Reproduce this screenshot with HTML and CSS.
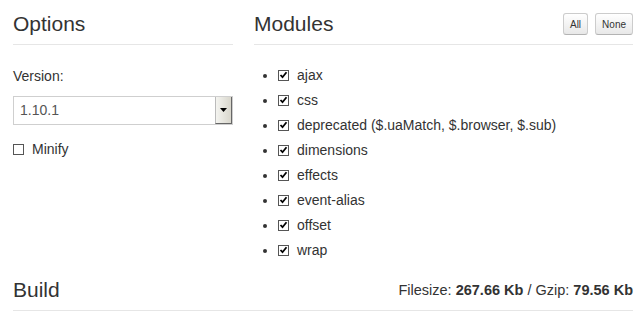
FILE: index.html
```html
<!DOCTYPE html>
<html lang="en">
<head>
<meta charset="UTF-8">
<title>Download Builder</title>
<link rel="stylesheet" href="styles.css">
</head>
<body>

<div class="builder">
    <div class="options">
        <h2 class="section-title">Options</h2>
        <label class="field-label">Version:</label>
        <div class="select-box">
            <span class="select-value">1.10.1</span>
            <span class="select-arrow">
                <svg width="7" height="4" viewBox="0 0 7 4"><path d="M0 0h7L3.5 4z" fill="#000"/></svg>
            </span>
        </div>
        <label class="check-row">
            <span class="check"></span>
            Minify
        </label>
    </div>

    <div class="modules">
        <div class="section-title modules-title">
            <h2>Modules</h2>
            <div class="btn-group">
                <button class="small-btn">All</button>
                <button class="small-btn">None</button>
            </div>
        </div>
        <ul class="module-list">
            <li><span class="check checked"></span>ajax</li>
            <li><span class="check checked"></span>css</li>
            <li><span class="check checked"></span>deprecated ($.uaMatch, $.browser, $.sub)</li>
            <li><span class="check checked"></span>dimensions</li>
            <li><span class="check checked"></span>effects</li>
            <li><span class="check checked"></span>event-alias</li>
            <li><span class="check checked"></span>offset</li>
            <li><span class="check checked"></span>wrap</li>
        </ul>
    </div>
</div>

<div class="section-title build-title">
    <h2>Build</h2>
    <div class="filesize">Filesize: <b>267.66 Kb</b> / Gzip: <b>79.56 Kb</b></div>
</div>

</body>
</html>
```

FILE: styles.css
```css
body {
    margin: 0;
    padding: 0 10px 0 13px;
    font-family: "Liberation Sans", Arial, sans-serif;
    font-size: 14px;
    color: #333;
    background-color: white;
}
h2 {
    margin: 0;
    font-size: 21px;
    font-weight: normal;
    line-height: 30px;
}
.builder {
    display: grid;
    grid-template-columns: 220px 1fr;
    column-gap: 21px;
}
.section-title {
    margin: 0;
    padding: 9px 0 5px;
    border-bottom: 1px solid #e6e6e6;
    font-size: 21px;
    font-weight: normal;
    line-height: 30px;
}
.modules-title, .build-title {
    display: flex;
    justify-content: space-between;
    align-items: center;
}
.field-label {
    display: block;
    margin-top: 22px;
    line-height: 18px;
}
.select-box {
    display: flex;
    height: 27px;
    margin-top: 11px;
    border: 1px solid #cfcfcf;
    background-color: white;
}
.select-value {
    flex: 1;
    padding-left: 6px;
    line-height: 27px;
    color: #555;
}
.select-arrow {
    width: 15px;
    display: flex;
    align-items: center;
    justify-content: center;
    background: linear-gradient(to right, #f4f4f0, #d8d6cc);
    border-left: 1px solid #bbb;
    border-right: 1px solid #666;
    border-bottom: 1px solid #666;
}
.check-row {
    display: flex;
    align-items: center;
    margin-top: 15px;
    line-height: 18px;
}
.check {
    display: inline-block;
    width: 9px;
    height: 9px;
    border: 1px solid #555;
    background-color: white;
    margin-right: 8px;
    flex-shrink: 0;
}
.check.checked {
    background: white url("data:image/svg+xml;utf8,<svg xmlns='http://www.w3.org/2000/svg' width='9' height='9'><path d='M1.5 4l2 2.2 4-5' stroke='black' stroke-width='1.8' fill='none'/></svg>") no-repeat center;
}
.btn-group {
    display: flex;
    gap: 7px;
}
.small-btn {
    font-family: "Liberation Sans", Arial, sans-serif;
    font-size: 10px;
    color: #333;
    height: 22px;
    padding: 0 6px;
    border: 1px solid #ccc;
    border-bottom-color: #b3b3b3;
    border-radius: 3px;
    background: linear-gradient(#ffffff, #e8e8e8);
}
.module-list {
    margin: 18px 0 0;
    padding-left: 24px;
    font-size: 14px;
}
.module-list li {
    line-height: 25px;
}
.module-list li .check {
    vertical-align: -1px;
}
.build-title {
    margin-top: 3px;
}
.filesize {
    font-size: 14.5px;
}
```
